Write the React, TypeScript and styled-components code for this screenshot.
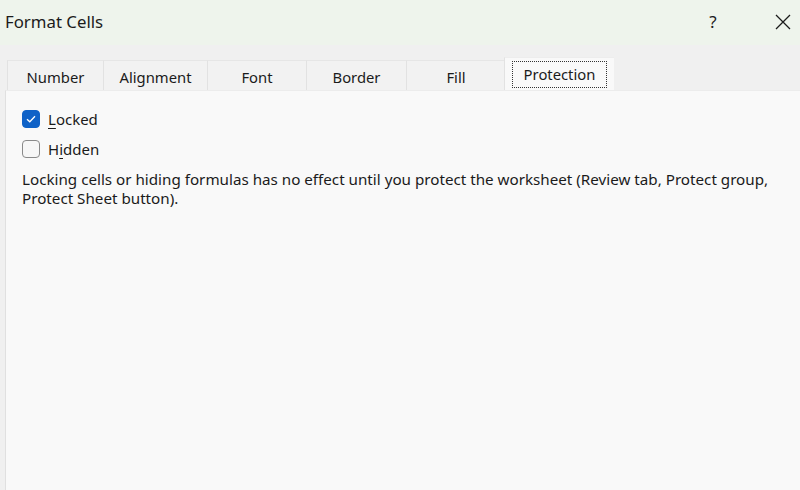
import * as React from "react";
import styled, { createGlobalStyle } from "styled-components";

const Global = createGlobalStyle`
  html, body {
    margin: 0;
    padding: 0;
    background: #f0f0f0;
    font-family: "Noto Sans", "Open Sans", sans-serif;
    color: #1b1b1b;
  }
`;

const Dialog = styled.div`
  width: 800px;
  height: 490px;
  display: flex;
  flex-direction: column;
  overflow: hidden;
  background: #f0f0f0;
`;

const TitleBar = styled.div`
  height: 45px;
  flex: none;
  display: flex;
  align-items: center;
  padding-left: 5px;
  background: #eef4ec;
`;

const Title = styled.div`
  flex: 1;
  font-size: 16.8px;
  margin-top: -2px;
`;

const TitleButton = styled.button<{ $w: number; $gap?: number }>`
  width: ${(p) => p.$w}px;
  margin-right: ${(p) => p.$gap ?? 0}px;
  height: 45px;
  border: none;
  background: transparent;
  display: flex;
  align-items: center;
  justify-content: center;
  font-family: inherit;
  font-size: 17px;
  color: #1b1b1b;
  padding: 0;
  margin-top: -2px;
`;

const TabStrip = styled.div`
  height: 45px;
  flex: none;
  display: flex;
  align-items: flex-end;
  padding-left: 7px;
`;

const Tab = styled.div<{ $w: number; $active?: boolean }>`
  width: ${(p) => p.$w}px;
  height: ${(p) => (p.$active ? 33 : 30)}px;
  box-sizing: border-box;
  display: flex;
  align-items: center;
  justify-content: center;
  font-size: 14.8px;
  background: ${(p) => (p.$active ? "#f9f9f9" : "#f2f2f2")};
  border-left: 1px solid #e2e2e2;
  border-top: 1px solid ${(p) => (p.$active ? "#ededed" : "#e6e6e6")};
  padding-top: ${(p) => (p.$active ? 0 : 2)}px;
  margin-right: ${(p) => (p.$active ? -1 : 0)}px;
  margin-left: ${(p) => (p.$active ? -1 : 0)}px;
  position: relative;
  z-index: ${(p) => (p.$active ? 1 : 0)};
`;

const FocusRing = styled.span`
  border: 1px dotted #333;
  padding: 2px 11px 3px;
  line-height: 20px;
`;

const Panel = styled.div`
  flex: 1;
  margin-left: 5px;
  background: #f9f9f9;
  border-left: 1px solid #e0e0e0;
  border-top: 1px solid #ececec;
  padding: 19px 0 0 16px;
  display: flex;
  flex-direction: column;
`;

const CheckRow = styled.label`
  display: flex;
  align-items: center;
  gap: 8px;
  height: 18px;
  margin-bottom: 12px;
  font-size: 15px;
`;

const Box = styled.span<{ $checked?: boolean }>`
  width: 18px;
  height: 18px;
  box-sizing: border-box;
  border-radius: 4px;
  display: flex;
  align-items: center;
  justify-content: center;
  background: ${(p) => (p.$checked ? "#0f62c7" : "#f7f7f7")};
  border: 1px solid ${(p) => (p.$checked ? "#0f62c7" : "#8a8a8a")};
`;

const Key = styled.span`
  text-decoration: underline;
  text-underline-offset: 3px;
  text-decoration-thickness: 1px;
`;

const Note = styled.p`
  margin: 0;
  font-size: 15.2px;
  line-height: 19px;
  width: 770px;
`;

function Check({ checked }: { checked?: boolean }) {
  return (
    <Box $checked={checked}>
      {checked && (
        <svg width="10" height="8" viewBox="0 0 10 8">
          <path d="M1 4.2 L3.8 6.8 L9 1.2" fill="none" stroke="#fff" strokeWidth="1.3" />
        </svg>
      )}
    </Box>
  );
}

const tabs: { label: string; w: number }[] = [
  { label: "Number", w: 96 },
  { label: "Alignment", w: 104 },
  { label: "Font", w: 99 },
  { label: "Border", w: 100 },
  { label: "Fill", w: 99 },
];

export default function App() {
  return (
    <>
      <Global />
      <Dialog>
        <TitleBar>
          <Title>Format Cells</Title>
          <TitleButton $w={40} $gap={33}>?</TitleButton>
          <TitleButton $w={34}>
            <svg width="16" height="16" viewBox="0 0 16 16">
              <path d="M1 1 L15 15 M15 1 L1 15" stroke="#1b1b1b" strokeWidth="1.3" />
            </svg>
          </TitleButton>
        </TitleBar>
        <TabStrip>
          {tabs.map((t) => (
            <Tab key={t.label} $w={t.w}>
              {t.label}
            </Tab>
          ))}
          <Tab $w={110} $active>
            <FocusRing>Protection</FocusRing>
          </Tab>
        </TabStrip>
        <Panel>
          <CheckRow>
            <Check checked />
            <span>
              <Key>L</Key>ocked
            </span>
          </CheckRow>
          <CheckRow>
            <Check />
            <span>
              H<Key>i</Key>dden
            </span>
          </CheckRow>
          <Note>
            Locking cells or hiding formulas has no effect until you protect the worksheet (Review tab, Protect group,
            Protect Sheet button).
          </Note>
        </Panel>
      </Dialog>
    </>
  );
}
